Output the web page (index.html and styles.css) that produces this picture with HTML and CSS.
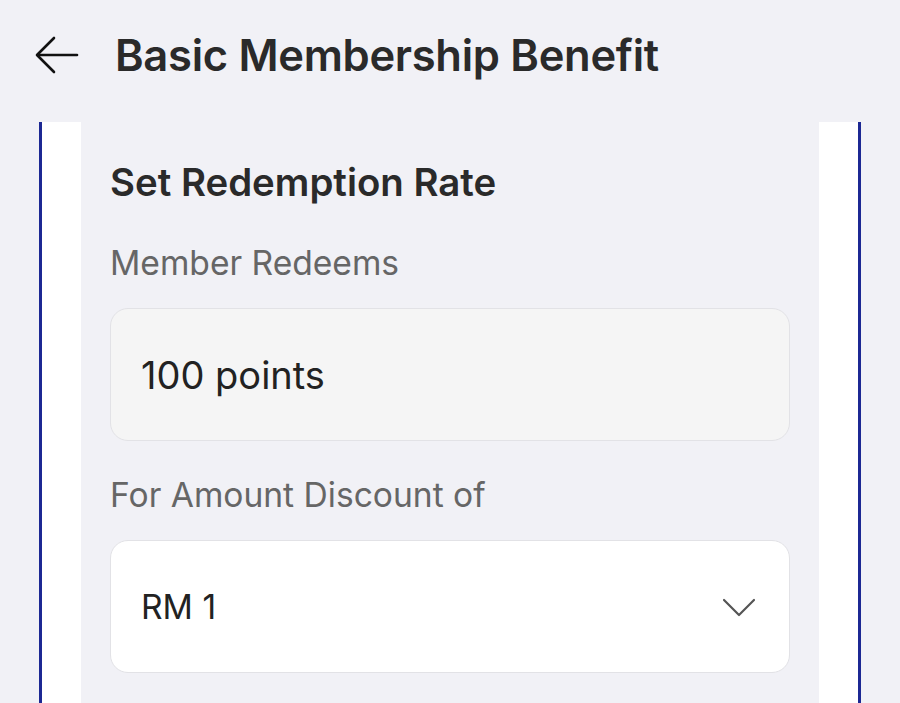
FILE: index.html
```html
<!DOCTYPE html>
<html lang="en">
<head>
    <meta charset="UTF-8">
    <meta name="viewport" content="width=device-width, initial-scale=1.0">
    <title>Basic Membership Benefit</title>
    <link rel="stylesheet" href="styles.css">
</head>
<body>

    <div class="header">
        <span class="back-icon">
            <svg width="44" height="38" viewBox="0 0 44 38" fill="none" stroke="#111" stroke-width="2.6" stroke-linecap="round" stroke-linejoin="round">
                <path d="M42 19H3"/>
                <path d="M19 2L2 19L19 36"/>
            </svg>
        </span>
        <h1>Basic Membership Benefit</h1>
    </div>

    <div class="panel">
        <div class="panel-inner">
            <h2>Set Redemption Rate</h2>

            <label class="field-label">Member Redeems</label>
            <div class="input-box readonly">100 points</div>

            <label class="field-label">For Amount Discount of</label>
            <div class="input-box select">
                <span>RM 1</span>
                <svg width="34" height="20" viewBox="0 0 34 20" fill="none" stroke="#555" stroke-width="2.2" stroke-linecap="round" stroke-linejoin="round">
                    <path d="M2 3L17 18L32 3"/>
                </svg>
            </div>
        </div>
    </div>

</body>
</html>
```

FILE: styles.css
```css
body {
    font-family: Inter, "Noto Sans", sans-serif;
    margin: 0;
    padding: 0;
    background-color: #f1f1f6;
    height: 703px;
    overflow: hidden;
    color: #222;
}
.header {
    display: flex;
    align-items: center;
    height: 122px;
    padding-left: 35px;
    box-sizing: border-box;
    padding-bottom: 13px;
}
.back-icon {
    display: flex;
    width: 44px;
    margin-right: 36px;
}
.header h1 {
    margin: 0;
    font-size: 43.5px;
    font-weight: 600;
    color: #2a2a2a;
    letter-spacing: -0.3px;
}
.panel {
    margin: 0 39px;
    border-left: 3px solid #1c2893;
    border-right: 3px solid #1c2893;
    background-color: #ffffff;
    padding: 0 39px;
    height: 581px;
}
.panel-inner {
    background-color: #f1f1f6;
    height: 100%;
    box-sizing: border-box;
    padding: 37px 29px 0;
}
h2 {
    margin: 0 0 37px;
    font-size: 38.4px;
    font-weight: 600;
    color: #2a2a2a;
}
.field-label {
    display: block;
    font-size: 33.6px;
    color: #666;
    margin-bottom: 25px;
}
.input-box {
    height: 133px;
    box-sizing: border-box;
    border: 1.5px solid #e2e2e6;
    border-radius: 18px;
    padding: 0 30px;
    display: flex;
    align-items: center;
    color: #222;
}
.readonly {
    background-color: #f5f5f5;
    margin-bottom: 33px;
    font-size: 38px;
}
.select {
    background-color: #ffffff;
    justify-content: space-between;
    padding-right: 33px;
}
.select span {
    font-size: 33.6px;
}
```
